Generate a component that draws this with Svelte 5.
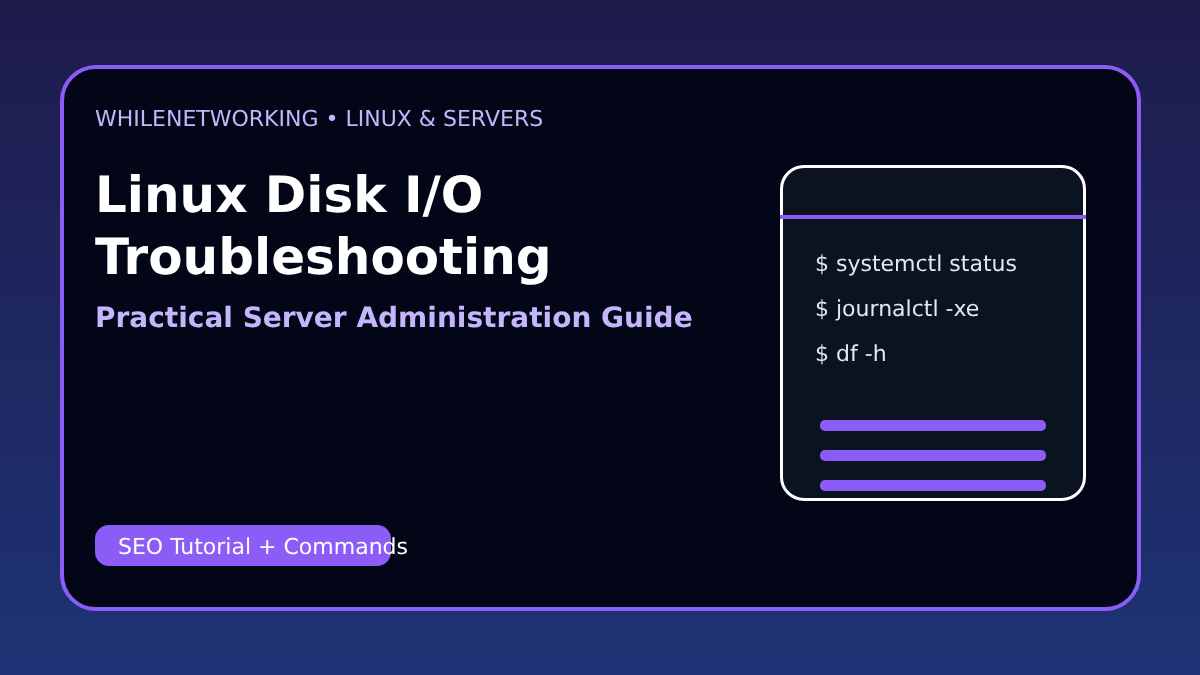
<script>
  const commands = ['$ systemctl status', '$ journalctl -xe', '$ df -h'];
  const bars = [1, 2, 3];
</script>

<main class="page">
  <section class="card">
    <div class="copy">
      <p class="eyebrow">WHILENETWORKING • LINUX &amp; SERVERS</p>
      <h1>Linux Disk I/O<br />Troubleshooting</h1>
      <h2>Practical Server Administration Guide</h2>
      <div class="pill"><span>SEO Tutorial + Commands</span></div>
    </div>
    <aside class="terminal">
      <div class="term-head"></div>
      <div class="term-body">
        {#each commands as c}
          <div class="cmd">{c}</div>
        {/each}
      </div>
      <div class="bars">
        {#each bars as b}
          <div class="bar"></div>
        {/each}
      </div>
    </aside>
  </section>
</main>

<style>
  :global(body) {
    margin: 0;
  }
  .page {
    box-sizing: border-box;
    width: 1200px;
    height: 675px;
    padding: 65px 59px 64px 60px;
    background: linear-gradient(180deg, #1e1b4b 0%, #1e3375 100%);
    font-family: "DejaVu Sans", sans-serif;
    text-rendering: geometricPrecision;
    overflow: hidden;
  }
  .card {
    box-sizing: border-box;
    height: 546px;
    border: 4px solid #8b5cf6;
    border-radius: 36px;
    background: #020617;
    display: flex;
    justify-content: space-between;
    padding: 0 51px 0 31px;
  }
  .copy {
    display: flex;
    flex-direction: column;
    flex: 1;
  }
  .eyebrow,
  h1,
  h2,
  .pill span,
  .cmd {
    will-change: transform;
  }
  .eyebrow {
    margin: 38px 0 0;
    font-size: 22px;
    line-height: 26px;
    color: #c4b5fd;
  }
  h1 {
    margin: 31px 0 0;
    font-size: 50px;
    line-height: 62px;
    font-weight: 700;
    color: #fff;
  }
  h2 {
    margin: 13px 0 0;
    font-size: 28px;
    line-height: 34px;
    font-weight: 700;
    color: #c4b5fd;
  }
  .pill {
    margin-top: auto;
    margin-bottom: 41px;
    width: 296px;
    height: 41px;
    box-sizing: border-box;
    padding-left: 23px;
    border-radius: 14px;
    background: #8b5cf6;
    color: #fff;
    font-size: 22px;
    line-height: 45px;
    white-space: nowrap;
  }
  .pill span {
    display: inline-block;
  }
  .terminal {
    box-sizing: border-box;
    align-self: flex-start;
    margin-top: 96px;
    width: 306px;
    height: 336px;
    border: 3px solid #fff;
    border-radius: 24px;
    background: #0b1320;
    display: flex;
    flex-direction: column;
  }
  .term-head {
    height: 47px;
    margin: 0 -3px;
    border-bottom: 4px solid #8b5cf6;
  }
  .term-body {
    padding: 23px 0 0 32px;
    flex: 1;
  }
  .cmd {
    font-size: 22px;
    line-height: 45px;
    color: #e2e8f0;
  }
  .bars {
    display: flex;
    flex-direction: column;
    gap: 19px;
    padding: 0 37px 7px;
  }
  .bar {
    height: 11px;
    border-radius: 5px;
    background: #8b5cf6;
  }
</style>
